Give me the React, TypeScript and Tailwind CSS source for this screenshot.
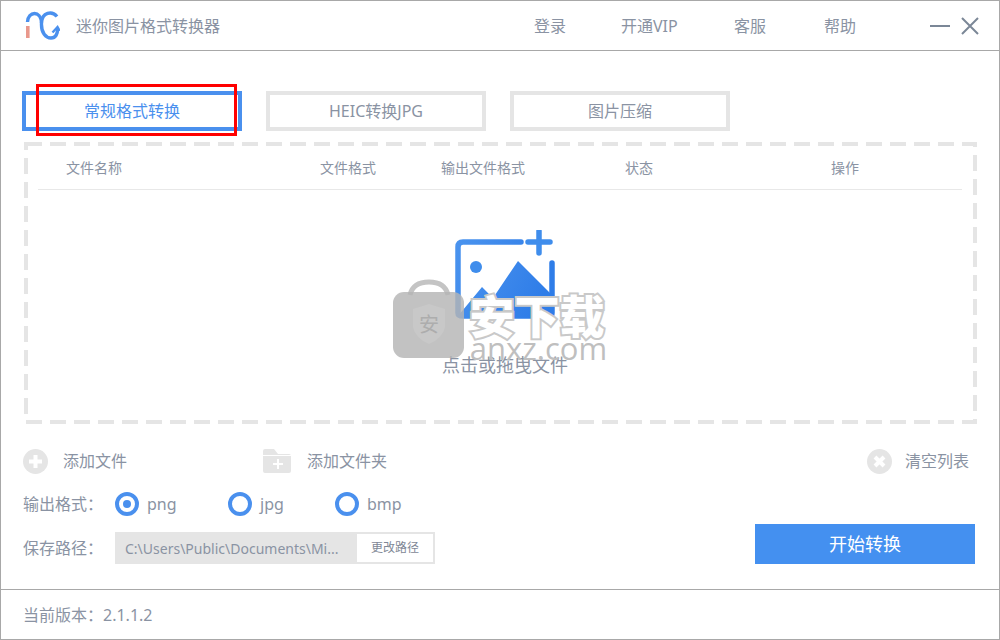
import React from 'react';

const FONT = "font-['Noto_Sans','Noto_Sans_CJK_SC',sans-serif]";

function Logo() {
  return (
    <svg width="36" height="32" viewBox="0 0 36 32" fill="none">
      <rect x="2" y="16" width="3.6" height="12" fill="#e9988c" />
      <path d="M3.5 12 C4 1 17 0 17.5 13" stroke="#4a90ee" strokeWidth="3.4" />
      <path d="M33 6.5 C28 0.5 18 2 17.5 13 C17 23 22 28 27 28 C31.5 28 34 24 33.5 18" stroke="#4a90ee" strokeWidth="3.4" />
      <path d="M28.5 22.5 L33.5 17 L35.5 21" stroke="#4a90ee" strokeWidth="2.4" />
    </svg>
  );
}

function WindowButtons() {
  return (
    <svg width="49" height="18" viewBox="0 0 49 18" fill="none" stroke="#7b8797" strokeWidth="2">
      <path d="M0 9 H20" />
      <path d="M32 1 L48 17 M48 1 L32 17" />
    </svg>
  );
}

function ImageAddIcon() {
  return (
    <svg width="100" height="90" viewBox="0 0 100 90" fill="none">
      <defs>
        <linearGradient id="g" x1="0" y1="0" x2="1" y2="0.3">
          <stop offset="0" stopColor="#4a93ee" />
          <stop offset="1" stopColor="#2f7de8" />
        </linearGradient>
      </defs>
      <path d="M66 12 H8 Q3 12 3 17 V83 Q3 86 8 86 H94 Q97 86 97 83 V33" stroke="url(#g)" strokeWidth="5.5" strokeLinecap="round" />
      <circle cx="21" cy="37" r="6" fill="#3f8dec" />
      <path d="M3 86 L27 57 L38 68 L63 31 L97 65 V86 Z" fill="url(#g)" />
      <path d="M73 12 H95 M84 1 V23" stroke="#3f8dec" strokeWidth="5.5" strokeLinecap="round" />
    </svg>
  );
}

function Watermark() {
  return (
    <div className="absolute left-[392px] top-[278px] flex items-start pointer-events-none">
      <svg width="72" height="81" viewBox="0 0 72 81">
        <path d="M17 16 Q20 3 36 3 Q52 3 55 16" fill="none" stroke="#c4c4c4" strokeWidth="5" />
        <rect x="0" y="13" width="71" height="66" rx="11" fill="#b5b5b5" fillOpacity="0.82" />
        <path d="M20 30 L36 25 L52 30 V48 Q50 59 36 65 Q22 59 20 48 Z" fill="#c8c8c8" />
        <text x="36" y="53" textAnchor="middle" fontSize="20" fill="#adadad" fontFamily="'Noto Sans CJK SC',sans-serif">安</text>
      </svg>
      <div className="ml-[1px] mt-[13px] w-[142px] flex flex-col items-center">
        <div className="text-[45px] leading-[46px] font-black text-white [-webkit-text-stroke:4px_#c9c9c9] [paint-order:stroke_fill] whitespace-nowrap font-['Noto_Sans_CJK_SC',sans-serif]">安下载</div>
        <div className="mt-[-7px] ml-[3px] text-[31px] leading-[34px] text-[#bfbfbf] font-['Open_Sans',sans-serif]">anxz.com</div>
      </div>
    </div>
  );
}

function Tab({ label, active }: { label: string; active?: boolean }) {
  return (
    <div
      className={`w-[220px] h-[40px] border-4 flex items-center justify-center text-[16px] ${
        active ? 'border-[#4a90ee] text-[#4a90ee]' : 'border-[#e5e5e5] text-[#8a93a3]'
      }`}
    >
      {label}
    </div>
  );
}

function Radio({ label, checked }: { label: string; checked?: boolean }) {
  return (
    <div className="flex items-center gap-[8px]">
      <div className="w-[24px] h-[24px] rounded-full border-[4px] border-[#4a90ee] flex items-center justify-center">
        {checked && <div className="w-[8px] h-[8px] rounded-full bg-[#4a90ee]" />}
      </div>
      <span className="text-[16px] text-[#8a93a3]">{label}</span>
    </div>
  );
}

export default function App() {
  return (
    <div className={`relative w-[1000px] h-[640px] bg-white border border-[#a8a8a8] flex flex-col overflow-hidden ${FONT}`}>
      {/* Header */}
      <div className="h-[49px] shrink-0 border-b border-[#a8a8a8] box-content flex items-center pl-[23px] pr-[20px]">
        <Logo />
        <span className="ml-[16px] text-[16px] text-[#8a93a3]">迷你图片格式转换器</span>
        <div className="ml-auto flex items-center text-[16px] text-[#8a93a3]">
          <span>登录</span>
          <span className="ml-[55px] w-[58px] whitespace-nowrap">开通VIP</span>
          <span className="ml-[55px]">客服</span>
          <span className="ml-[58px]">帮助</span>
        </div>
        <div className="ml-[74px]"><WindowButtons /></div>
      </div>

      {/* Body */}
      <div className="flex-1 pl-[21px] pr-[22px] pt-[40px]">
        <div className="flex gap-[24px]">
          <Tab label="常规格式转换" active />
          <Tab label="HEIC转换JPG" />
          <Tab label="图片压缩" />
        </div>

        <div className="relative mt-[11px] ml-[2px] h-[282px] pl-[14px] pr-[15px] flex flex-col">
          <svg className="absolute inset-0 w-full h-full" fill="none">
            <rect x="2" y="2" width="949" height="278" stroke="#e5e5e5" strokeWidth="4" strokeDasharray="16 8" />
          </svg>
          <div className="h-[47px] mt-[1px] border-b border-[#e8e8e8] flex items-center text-[14px] text-[#8a93a3] pt-[3px]">
            <span className="ml-[28px] w-[254px]">文件名称</span>
            <span className="w-[121px]">文件格式</span>
            <span className="w-[184px]">输出文件格式</span>
            <span className="w-[206px]">状态</span>
            <span>操作</span>
          </div>
          <div className="flex-1 flex flex-col items-center pt-[40px] pl-[10px]">
            <ImageAddIcon />
            <span className="mt-[33px] text-[18px] leading-[24px] text-[#8a93a3]">点击或拖曳文件</span>
          </div>
        </div>

        {/* Actions */}
        <div className="mt-[24px] ml-[1px] flex items-center h-[26px] text-[16px] text-[#8a93a3]">
          <svg width="25" height="25" viewBox="0 0 25 25">
            <circle cx="12.5" cy="12.5" r="12.5" fill="#e5e5e5" />
            <path d="M12.5 6 V19 M6 12.5 H19" stroke="#fff" strokeWidth="4" />
          </svg>
          <span className="ml-[15px]">添加文件</span>
          <svg className="ml-[136px]" width="28" height="24" viewBox="0 0 28 24">
            <path d="M0 2 Q0 0 2 0 H11 L15 5 H26 Q28 5 28 7 V22 Q28 24 26 24 H2 Q0 24 0 22 Z" fill="#e5e5e5" />
            <path d="M15 10 V20 M10 15 H20" stroke="#fff" strokeWidth="2" />
            <path d="M0 6.5 H28" stroke="#fff" strokeWidth="1" />
          </svg>
          <span className="ml-[16px]">添加文件夹</span>
          <svg className="ml-auto" width="25" height="25" viewBox="0 0 25 25">
            <circle cx="12.5" cy="12.5" r="12.5" fill="#e5e5e5" />
            <path d="M8 8 L17 17 M17 8 L8 17" stroke="#fff" strokeWidth="4" />
          </svg>
          <span className="ml-[13px] mr-[8px]">清空列表</span>
        </div>

        {/* Options */}
        <div className="mt-[17px] ml-[1px] flex justify-between">
          <div>
            <div className="flex items-center h-[26px]">
              <span className="w-[92px] text-[16px] text-[#8a93a3] whitespace-nowrap">输出格式：</span>
              <div className="w-[113px]"><Radio label="png" checked /></div>
              <div className="w-[107px]"><Radio label="jpg" /></div>
              <Radio label="bmp" />
            </div>
            <div className="flex items-center mt-[15px]">
              <span className="w-[92px] text-[16px] text-[#8a93a3] whitespace-nowrap">保存路径：</span>
              <div className="w-[320px] h-[32px] bg-[#e5e5e5] flex items-center p-[2px]">
                <span className="w-[240px] pl-[8px] text-[14px] text-[#8a93a3] whitespace-nowrap">C:\Users\Public\Documents\Mi...</span>
                <span className="flex-1 h-full bg-white flex items-center justify-center text-[12px] text-[#7f8896]">更改路径</span>
              </div>
            </div>
          </div>
          <div className="mt-[33px] mr-[2px] w-[220px] h-[40px] bg-[#4490f0] flex items-center justify-center text-[18px] text-white">
            开始转换
          </div>
        </div>
      </div>

      {/* Footer */}
      <div className="h-[50px] shrink-0 border-t border-[#a8a8a8] flex items-center pl-[22px] text-[16px] text-[#8a93a3]">
        当前版本：2.1.1.2
      </div>

      <Watermark />
      <div className="absolute left-[35px] top-[83px] w-[201px] h-[52px] border-[3px] border-[#ff0000]" />
    </div>
  );
}
